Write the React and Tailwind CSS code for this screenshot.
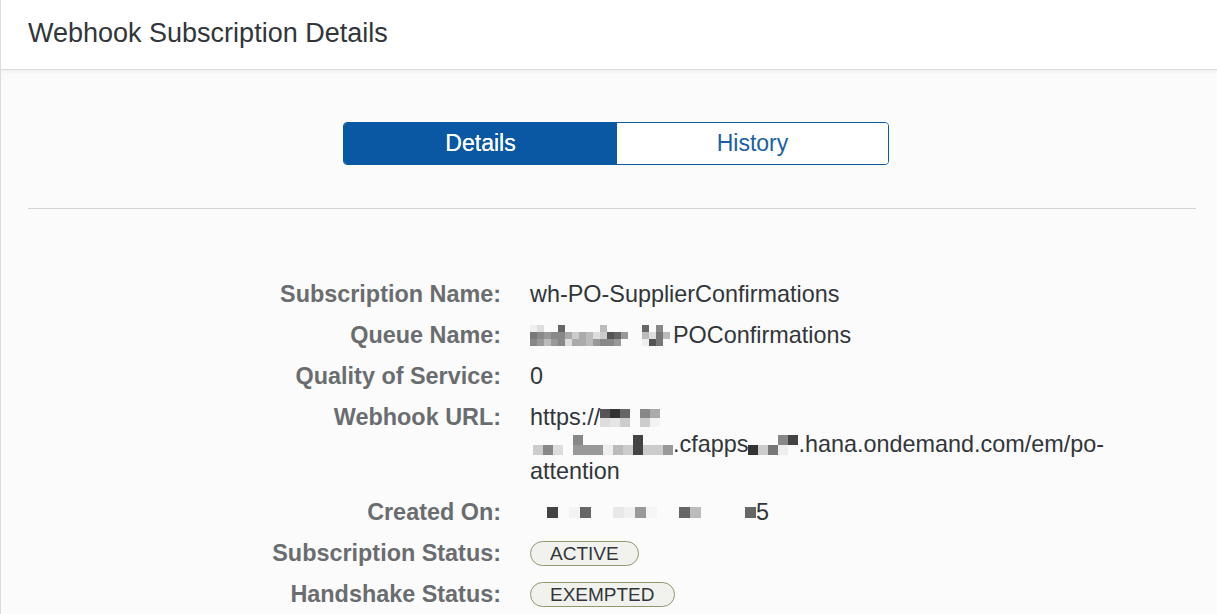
const QUEUE_BLUR = [
  ['#eee', '#ddd', null, null, '#666', null, null, null, null, null, '#bbb', null, null, null, null, null, '#666', null, '#888', null],
  ['#777', '#888', '#999', '#888', '#888', '#aaa', '#ccc', '#aaa', '#bbb', '#ddd', '#ccc', '#555', '#666', '#999', null, null, '#bbb', '#ddd', '#777', '#bbb'],
  ['#888', '#999', '#bbb', '#999', '#888', '#ddd', '#aaa', '#aaa', '#bbb', '#999', '#888', '#888', '#999', null, null, null, '#eee', '#555', '#777', null],
];

const URL_BLUR_A = [
  ['#555', '#333', '#666', null, '#888', '#aaa'],
  ['#ddd', '#e5e5e5', '#ccc', null, '#ccc', '#f3f3f3'],
];

const URL_BLUR_B = [
  [null, null, null, null, '#888', null, null, null, null, null, '#444', null, null, null],
  ['#ccc', '#888', '#ddd', null, '#999', '#999', '#999', '#eee', '#bbb', '#ccc', '#444', '#ccc', '#ccc', '#999'],
];

const URL_BLUR_C = [
  [null, null, null, '#888', '#444'],
  ['#333', '#ccc', '#777', '#eee', null],
];

const DATE_BLUR = [
  ['#444', null, '#f3f3f3', '#666', null, null, '#e8e8e8', '#f0f0f0', '#999', '#f5f5f5', null, '#fafafa', '#666', '#bbb', null, null, null, null, '#666'],
];

// pixelated redaction block, colours come from the data above
function Blur({ cells, w, h }) {
  return (
    <span className="inline-flex shrink-0 flex-col">
      {cells.map((row, i) => (
        <span key={i} className="flex">
          {row.map((c, j) => (
            <span key={j} style={{ width: w, height: h, backgroundColor: c || 'transparent' }} />
          ))}
        </span>
      ))}
    </span>
  );
}

function Badge({ children }) {
  return (
    <span className="inline-flex h-[25px] items-center rounded-full border-[1.5px] border-[#8e9a6c] bg-[#f1f2ee] px-[19px] text-[19px] leading-none text-[#32363a]">
      {children}
    </span>
  );
}

function Row({ label, children }) {
  return (
    <div className="flex gap-[29px] leading-[27px]">
      <div className="h-[27px] w-[473px] shrink-0 text-right font-bold text-[#6a6d70]">{label}</div>
      <div className="min-w-0 flex-1 text-[#32363a]">{children}</div>
    </div>
  );
}

function Line({ children }) {
  return <div className="flex h-[27px] items-center whitespace-nowrap">{children}</div>;
}

export default function App() {
  return (
    <div className="h-[614px] w-[1217px] overflow-hidden border-l border-[#dcdcdc] bg-[#fbfbfb] font-['Liberation_Sans',Arial,sans-serif]">
      {/* Header */}
      <div className="flex h-[70px] items-center border-b border-[#d9d9d9] bg-white pb-[3px] pl-[27px] shadow-[0_2px_4px_rgba(0,0,0,0.05)]">
        <h1 className="text-[27px] font-normal text-[#32363a]">Webhook Subscription Details</h1>
      </div>

      {/* Segmented tabs */}
      <div className="pt-[52px]">
        <div className="ml-[342px] flex h-[43px] w-[546px] overflow-hidden rounded-[4px] border border-[#0a5aa4] text-[23px]">
          <button className="flex w-[273px] items-center justify-center bg-[#0a57a3] text-white [text-shadow:0_0_0.4px_#fff]">Details</button>
          <button className="flex flex-1 items-center justify-center bg-white text-[#1a5fa6]">History</button>
        </div>
      </div>

      <div className="ml-[27px] mr-[21px] mt-[43px] h-px bg-[#d3d3d3]" />

      {/* Fields */}
      <div className="flex flex-col gap-[14px] pt-[72px] pl-[27px] text-[23.4px]">
        <Row label="Subscription Name:">
          <Line>wh-PO-SupplierConfirmations</Line>
        </Row>
        <Row label="Queue Name:">
          <Line>
            <Blur cells={QUEUE_BLUR} w={7} h={7} />
            <span className="ml-[3px]">POConfirmations</span>
          </Line>
        </Row>
        <Row label="Quality of Service:">
          <Line>0</Line>
        </Row>
        <Row label="Webhook URL:">
          <Line>
            https://
            <Blur cells={URL_BLUR_A} w={10} h={9} />
          </Line>
          <Line>
            <span className="ml-[3px] flex"><Blur cells={URL_BLUR_B} w={10} h={10} /></span>
            <span>.cfapps</span>
            <Blur cells={URL_BLUR_C} w={10} h={10} />
            <span>.hana.ondemand.com/em/po-</span>
          </Line>
          <Line>attention</Line>
        </Row>
        <Row label="Created On:">
          <Line>
            <span className="ml-[17px] flex"><Blur cells={DATE_BLUR} w={11} h={11} /></span>
            <span>5</span>
          </Line>
        </Row>
        <Row label="Subscription Status:">
          <Line>
            <Badge>ACTIVE</Badge>
          </Line>
        </Row>
        <Row label="Handshake Status:">
          <Line>
            <Badge>EXEMPTED</Badge>
          </Line>
        </Row>
      </div>
    </div>
  );
}
